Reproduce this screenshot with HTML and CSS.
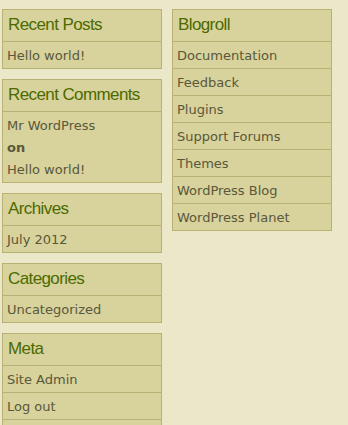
FILE: index.html
```html
<!DOCTYPE html>
<html lang="en">
<head>
    <meta charset="UTF-8">
    <title>Sidebar</title>
    <link rel="stylesheet" href="styles.css">
</head>
<body>
    <div class="sidebar">
        <div class="column">
            <div class="widget">
                <h2>Recent Posts</h2>
                <ul>
                    <li><a href="#">Hello world!</a></li>
                </ul>
            </div>
            <div class="widget">
                <h2>Recent Comments</h2>
                <ul>
                    <li class="comment">
                        <span>Mr WordPress</span>
                        <b>on</b>
                        <a href="#">Hello world!</a>
                    </li>
                </ul>
            </div>
            <div class="widget">
                <h2>Archives</h2>
                <ul>
                    <li><a href="#">July 2012</a></li>
                </ul>
            </div>
            <div class="widget">
                <h2>Categories</h2>
                <ul>
                    <li><a href="#">Uncategorized</a></li>
                </ul>
            </div>
            <div class="widget">
                <h2>Meta</h2>
                <ul>
                    <li><a href="#">Site Admin</a></li>
                    <li><a href="#">Log out</a></li>
                    <li><a href="#">Entries RSS</a></li>
                    <li><a href="#">Comments RSS</a></li>
                    <li><a href="#">WordPress.org</a></li>
                </ul>
            </div>
        </div>
        <div class="column">
            <div class="widget">
                <h2>Blogroll</h2>
                <ul>
                    <li><a href="#">Documentation</a></li>
                    <li><a href="#">Feedback</a></li>
                    <li><a href="#">Plugins</a></li>
                    <li><a href="#">Support Forums</a></li>
                    <li><a href="#">Themes</a></li>
                    <li><a href="#">WordPress Blog</a></li>
                    <li><a href="#">WordPress Planet</a></li>
                </ul>
            </div>
        </div>
    </div>
</body>
</html>
```

FILE: styles.css
```css
body { margin: 0; background: #ebe7c9; font-family: "DejaVu Sans", Verdana, sans-serif; font-size: 13px; color: #59583a; }
.sidebar { display: flex; align-items: flex-start; gap: 10px; padding: 9px 0 0 2px; }
.column { width: 160px; display: flex; flex-direction: column; gap: 10px; }
.widget { background: #d8d29c; border: 1px solid #b7b173; }
.widget h2 { margin: 0; height: 31px; line-height: 30px; padding: 0 5px; border-bottom: 1px solid #b7b173; font-family: "Liberation Sans", Arial, sans-serif; font-weight: normal; font-size: 17px; letter-spacing: -0.6px; color: #4b6a00; }
.widget ul { list-style: none; margin: 0; padding: 0; }
.widget li { padding: 3px 4px 1px; line-height: 22px; border-top: 1px solid #b7b173; }
.widget li:first-child { border-top: none; }
.widget a { color: #59583a; text-decoration: none; }
.comment span, .comment b, .comment a { display: block; }
```
